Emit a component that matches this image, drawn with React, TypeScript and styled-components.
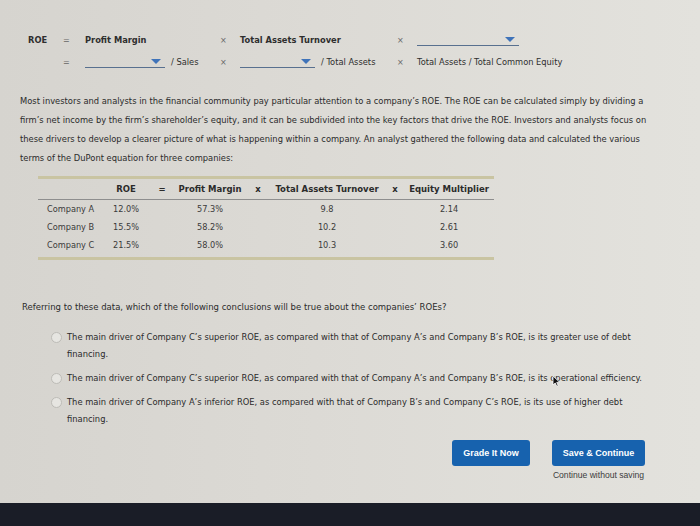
import React from "react";
import styled, { createGlobalStyle } from "styled-components";

const Global = createGlobalStyle`
  html, body { margin: 0; padding: 0; }
  body {
    font-family: "DejaVu Sans", Verdana, sans-serif;
    color: #2e2e2e;
    background: #1b1e28;
  }
`;

const Page = styled.div`
  width: 700px;
  height: 526px;
  display: flex;
  flex-direction: column;
  overflow: hidden;
  position: relative;
`;

const Sheet = styled.div`
  flex: 1;
  background: linear-gradient(90deg, #d6d4cf 0%, #dcdad5 45%, #e3e2dd 100%);
  display: flex;
  flex-direction: column;
`;

const Footer = styled.div`
  height: 23px;
  background: #1a1d27;
`;

const Equation = styled.div`
  margin: 33px 0 0 28px;
  display: grid;
  grid-template-columns: 35px 22px 135px 20px 157px 20px auto;
  grid-auto-rows: 14px;
  row-gap: 8px;
  align-items: center;
  font-size: 8.3px;
`;

const Label = styled.span<{ $bold?: boolean }>`
  font-weight: ${(p) => (p.$bold ? 700 : 400)};
  white-space: nowrap;
`;

const Op = styled.span`
  color: #666;
  font-size: 8px;
`;

const Cell = styled.div`
  display: flex;
  align-items: center;
  gap: 6px;
  white-space: nowrap;
`;

const Drop = styled.div<{ $w: number }>`
  width: ${(p) => p.$w}px;
  height: 12px;
  border-bottom: 1px solid #58708f;
  position: relative;
  display: flex;
  justify-content: flex-end;
  align-items: center;
  padding-right: 4px;
  box-sizing: border-box;
`;

const Arrow = styled.span`
  width: 0;
  height: 0;
  border-left: 5px solid transparent;
  border-right: 5px solid transparent;
  border-top: 5px solid #3f73b9;
`;

const Para = styled.p`
  margin: 23px 0 0 20px;
  font-size: 8.35px;
  line-height: 19px;
  color: #2b2b2b;
  white-space: nowrap;
`;

const Table = styled.table`
  margin: 8px 0 0 38px;
  border-collapse: collapse;
  width: 456px;
  table-layout: fixed;
  font-size: 8.5px;
  border-top: 3px solid #c9c4a2;
  border-bottom: 3px solid #c9c4a2;
`;

const Th = styled.th<{ $w: number }>`
  width: ${(p) => p.$w}px;
  height: 20px;
  padding: 0;
  text-align: center;
  font-weight: 700;
  border-bottom: 1px solid #8e8e8e;
  white-space: nowrap;
  color: #2b2b2b;
`;

const Td = styled.td<{ $left?: boolean }>`
  height: 18px;
  padding: 0 0 0 ${(p) => (p.$left ? "9px" : "0")};
  text-align: ${(p) => (p.$left ? "left" : "center")};
  white-space: nowrap;
  color: #3a3a3a;
  font-size: 8.2px;
`;

const LastRow = styled.tr`
  td { padding-bottom: 3px; }
`;

const Question = styled.p`
  margin: 40px 0 0 22px;
  font-size: 8.5px;
  line-height: 14px;
  color: #2b2b2b;
`;

const Options = styled.div`
  margin: 15px 0 0 51px;
  display: flex;
  flex-direction: column;
  gap: 7px;
`;

const Option = styled.label`
  display: flex;
  align-items: flex-start;
  gap: 5px;
  font-size: 8.35px;
  line-height: 17px;
  color: #2b2b2b;
  white-space: nowrap;
`;

const Radio = styled.span`
  flex: none;
  width: 9px;
  height: 9px;
  margin-top: 3px;
  border-radius: 50%;
  border: 1px solid #bdbcb7;
  background: #e6e5e1;
`;

const Actions = styled.div`
  margin: 12px 55px 0 0;
  display: flex;
  justify-content: flex-end;
  align-items: flex-start;
  gap: 22px;
`;

const ActionCol = styled.div`
  display: flex;
  flex-direction: column;
  align-items: center;
  gap: 2px;
`;

const Button = styled.button<{ $w: number }>`
  width: ${(p) => p.$w}px;
  height: 26px;
  border: none;
  border-radius: 3px;
  background: #1762ae;
  color: #fff;
  font-family: "Liberation Sans", Arial, sans-serif;
  font-weight: 700;
  font-size: 9px;
  padding: 0;
`;

const Link = styled.span`
  font-family: "Liberation Sans", Arial, sans-serif;
  font-size: 8.6px;
  line-height: 14px;
  color: #3c3c3c;
`;

const Cursor = styled.svg`
  position: absolute;
  left: 552px;
  top: 375px;
`;

export default function App() {
  return (
    <Page>
      <Global />
      <Sheet>
        <Equation>
          <Label $bold>ROE</Label>
          <Op>=</Op>
          <Label $bold>Profit Margin</Label>
          <Op>×</Op>
          <Label $bold>Total Assets Turnover</Label>
          <Op>×</Op>
          <Drop $w={102}>
            <Arrow />
          </Drop>

          <span />
          <Op>=</Op>
          <Cell>
            <Drop $w={80}>
              <Arrow />
            </Drop>
            <Label>/ Sales</Label>
          </Cell>
          <Op>×</Op>
          <Cell>
            <Drop $w={75}>
              <Arrow />
            </Drop>
            <Label>/ Total Assets</Label>
          </Cell>
          <Op>×</Op>
          <Label>Total Assets / Total Common Equity</Label>
        </Equation>

        <Para>
          Most investors and analysts in the financial community pay particular attention to a company’s ROE. The ROE can be calculated simply by dividing a
          <br />
          firm’s net income by the firm’s shareholder’s equity, and it can be subdivided into the key factors that drive the ROE. Investors and analysts focus on
          <br />
          these drivers to develop a clearer picture of what is happening within a company. An analyst gathered the following data and calculated the various
          <br />
          terms of the DuPont equation for three companies:
        </Para>

        <Table>
          <thead>
            <tr>
              <Th $w={62}></Th>
              <Th $w={52}>ROE</Th>
              <Th $w={20}>=</Th>
              <Th $w={76}>Profit Margin</Th>
              <Th $w={20}>x</Th>
              <Th $w={118}>Total Assets Turnover</Th>
              <Th $w={18}>x</Th>
              <Th $w={90}>Equity Multiplier</Th>
            </tr>
          </thead>
          <tbody>
            <tr>
              <Td $left>Company A</Td>
              <Td>12.0%</Td>
              <Td />
              <Td>57.3%</Td>
              <Td />
              <Td>9.8</Td>
              <Td />
              <Td>2.14</Td>
            </tr>
            <tr>
              <Td $left>Company B</Td>
              <Td>15.5%</Td>
              <Td />
              <Td>58.2%</Td>
              <Td />
              <Td>10.2</Td>
              <Td />
              <Td>2.61</Td>
            </tr>
            <LastRow>
              <Td $left>Company C</Td>
              <Td>21.5%</Td>
              <Td />
              <Td>58.0%</Td>
              <Td />
              <Td>10.3</Td>
              <Td />
              <Td>3.60</Td>
            </LastRow>
          </tbody>
        </Table>

        <Question>
          Referring to these data, which of the following conclusions will be true about the companies’ ROEs?
        </Question>

        <Options>
          <Option>
            <Radio />
            <span>
              The main driver of Company C’s superior ROE, as compared with that of Company A’s and Company B’s ROE, is its greater use of debt
              <br />
              financing.
            </span>
          </Option>
          <Option>
            <Radio />
            <span>
              The main driver of Company C’s superior ROE, as compared with that of Company A’s and Company B’s ROE, is its operational efficiency.
            </span>
          </Option>
          <Option>
            <Radio />
            <span>
              The main driver of Company A’s inferior ROE, as compared with that of Company B’s and Company C’s ROE, is its use of higher debt
              <br />
              financing.
            </span>
          </Option>
        </Options>

        <Actions>
          <ActionCol>
            <Button $w={78}>Grade It Now</Button>
          </ActionCol>
          <ActionCol>
            <Button $w={93}>Save &amp; Continue</Button>
            <Link>Continue without saving</Link>
          </ActionCol>
        </Actions>
      </Sheet>
      <Footer />
      <Cursor width="9" height="12" viewBox="0 0 9 12">
        <path d="M1 1 L1 10 L3.2 8 L4.8 11.3 L6.2 10.6 L4.7 7.4 L7.6 7.2 Z" fill="#111" stroke="#fff" strokeWidth="0.8" />
      </Cursor>
    </Page>
  );
}
